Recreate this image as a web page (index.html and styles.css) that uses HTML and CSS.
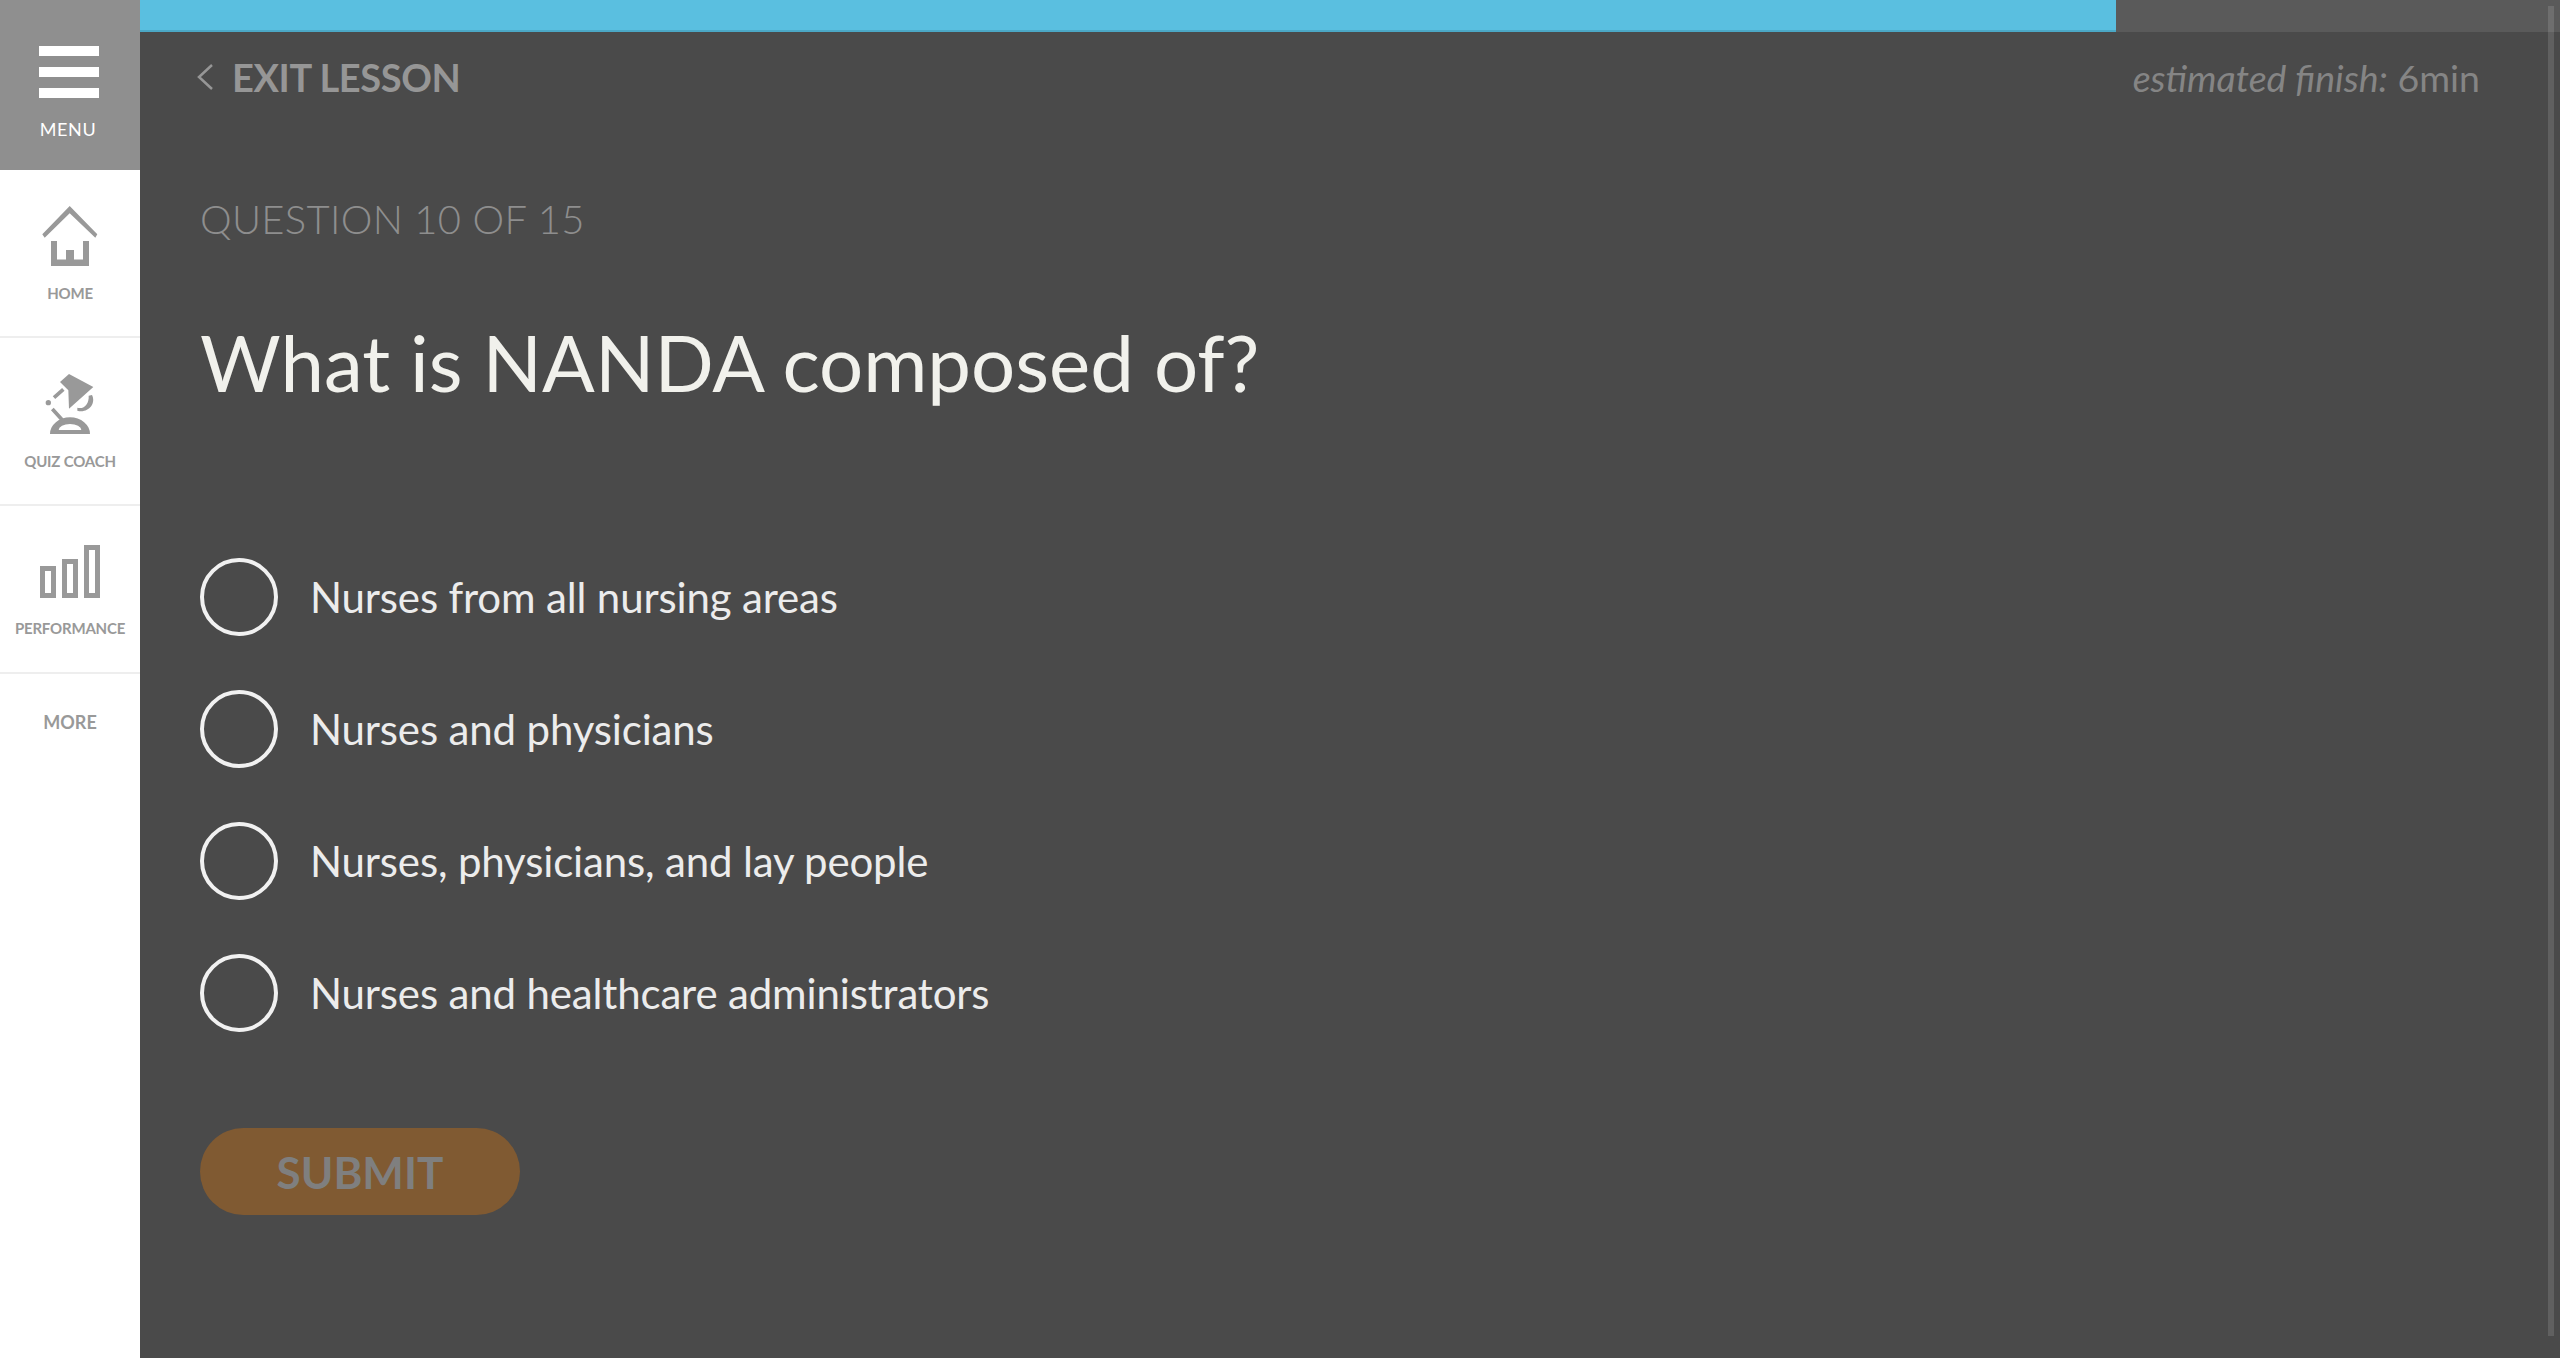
FILE: index.html
```html
<!DOCTYPE html>
<html lang="en">
<head>
<meta charset="utf-8">
<title>Question 10 of 15</title>
<link rel="stylesheet" href="styles.css">
</head>
<body>
<div class="app">
  <nav class="sidebar">
    <div class="menu">
      <div class="burger"><span></span><span></span><span></span></div>
      <div class="menu-label">MENU</div>
    </div>
    <div class="nav-item nav-home">
      <svg class="icon" width="60" height="66" viewBox="0 0 60 66"><path d="M2.300 30.300 L29.700 2 L57.300 30.300 L55.300 33.700 L29.700 9.300 L4.700 33.700 Z" fill="#999"/><path d="M11 37 H17 V55.500 H26 V46 H34 V55.500 H43 V37 H49 V62 H11 Z" fill="#999"/></svg>
      <div class="nav-label">HOME</div>
    </div>
    <div class="nav-item nav-quiz">
      <svg class="icon" width="60" height="66" viewBox="120 95 180 198"><path d="M207 101 L180 125 L205 150 L207 205 L280 140 Z" fill="#999"/><path d="M162 172 L190 147 M157 206 L193 246" stroke="#999" stroke-width="11" fill="none"/><circle cx="145" cy="187" r="8" fill="#999"/><path d="M150 281 A60 50 0 0 1 270 281 Z M176 269 H244 A34 18 0 0 0 176 269 Z" fill="#999" fill-rule="evenodd"/><path d="M232 202 C252 208 268 190 266 166 L276 164 C290 192 262 220 232 211 Z" fill="#999"/></svg>
      <div class="nav-label">QUIZ COACH</div>
    </div>
    <div class="nav-item nav-perf">
      <svg class="icon" width="60" height="53" viewBox="0 0 60 53"><path d="M2.500 23.500 H13.500 V50.500 H2.500 Z M24.500 16.500 H35.500 V50.500 H24.500 Z M46.500 2.500 H57.500 V50.500 H46.500 Z" fill="none" stroke="#999" stroke-width="5"/></svg>
      <div class="nav-label">PERFORMANCE</div>
    </div>
    <div class="more">MORE</div>
  </nav>
  <main class="main">
    <div class="progress"><div class="progress-fill"></div></div>
    <div class="scroll-thumb"></div>
    <div class="content">
      <header class="topbar">
        <a class="exit"><svg width="18" height="28" viewBox="0 0 18 28"><path d="M16 2 L3 14 L16 26" fill="none" stroke="#969696" stroke-width="2.500"/></svg><span>EXIT LESSON</span></a>
        <div class="estimate"><em>estimated finish:</em> 6min</div>
      </header>
      <div class="qnum">QUESTION 10 OF 15</div>
      <h1 class="question">What is NANDA composed of?</h1>
      <ul class="answers">
        <li class="answer"><span class="radio"></span><span>Nurses from all nursing areas</span></li>
        <li class="answer"><span class="radio"></span><span>Nurses and physicians</span></li>
        <li class="answer"><span class="radio"></span><span>Nurses, physicians, and lay people</span></li>
        <li class="answer"><span class="radio"></span><span>Nurses and healthcare administrators</span></li>
      </ul>
      <div class="submit">SUBMIT</div>
    </div>
  </main>
</div>
</body>
</html>
```
FILE: styles.css
```css
* { box-sizing: border-box; }
html, body { margin: 0; height: 100%; overflow: hidden; }
body { font-family: "Lato", "Open Sans", sans-serif; background: #4a4a4a; }
.app { display: flex; height: 1358px; }
.sidebar { width: 140px; flex: none; background: #fff; display: flex; flex-direction: column; }
.menu { height: 170px; background: #8f8f8f; display: flex; flex-direction: column; align-items: center; padding-top: 46px; }
.burger { width: 60px; display: flex; flex-direction: column; gap: 11px; margin-left: -2px; }
.burger span { display: block; height: 10px; background: #fff; }
.menu-label { color: #fff; font-size: 18px; line-height: 22px; margin-top: 20px; margin-left: -4px; letter-spacing: 0.6px; }
.nav-item { height: 168px; border-bottom: 2px solid #eee; display: flex; flex-direction: column; align-items: center; }
.nav-home { padding-top: 34px; }
.nav-quiz { padding-top: 34px; }
.nav-perf { padding-top: 39px; }
.icon { display: block; flex: none; }
.nav-label { color: #999; font-size: 15px; line-height: 18px; font-weight: 700; margin-top: 14px; white-space: nowrap; letter-spacing: -0.2px; }
.nav-perf .nav-label { margin-top: 21px; }
.more { color: #999; font-size: 18px; font-weight: 700; text-align: center; line-height: 20px; padding-top: 38px; }
.main { flex: 1; position: relative; min-width: 0; }
.progress { height: 32px; background: #5a5a5a; }
.progress-fill { width: 1976px; height: 32px; background: #5abfe0; border-bottom: 2px solid #4ba8c6; }
.scroll-thumb { position: absolute; top: 6px; right: 6px; width: 6px; bottom: 22px; background: rgba(255, 255, 255, 0.12); }
.content { padding: 0 80px 0 60px; }
.topbar { display: flex; justify-content: space-between; align-items: center; height: 90px; }
.exit { display: flex; align-items: center; gap: 18px; color: #969696; font-size: 38px; font-weight: 700; letter-spacing: -0.4px; margin-left: -4px; }
.estimate { color: #858585; font-size: 37.500px; font-weight: 400; }
.qnum { color: #8e8e8e; font-size: 40px; font-weight: 300; line-height: 48px; margin-top: 73px; letter-spacing: 0.3px; }
.question { color: #f1f1ec; font-size: 78px; font-weight: 400; line-height: 96px; margin: 71px 0 0; }
.answers { list-style: none; margin: 148px 0 0; padding: 0; display: flex; flex-direction: column; gap: 54px; }
.answer { display: flex; align-items: center; gap: 32px; height: 78px; color: #ececec; font-size: 42px; font-weight: 400; letter-spacing: -0.15px; }
.radio { width: 78px; height: 78px; border: 4px solid #f1f1f1; border-radius: 50%; flex: none; }
.submit { width: 320px; height: 87px; margin-top: 96px; border-radius: 44px; background: #805a32; color: #7f7f7f; font-size: 44px; font-weight: 700; display: flex; align-items: center; justify-content: center; }
```
